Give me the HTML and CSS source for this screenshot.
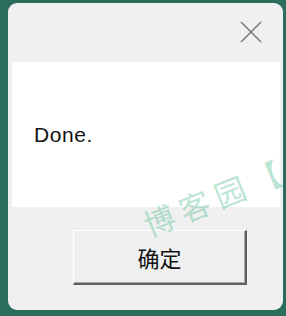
FILE: index.html
```html
<!DOCTYPE html>
<html lang="zh">
<head>
<meta charset="utf-8">
<title>Message</title>
<link rel="stylesheet" href="styles.css">
</head>
<body>
<div class="window">
  <div class="titlebar">
    <svg class="close" width="22" height="22" viewBox="0 0 22 22" aria-label="Close">
      <path d="M1 1 L21 21 M21 1 L1 21" stroke="#7c7c7c" stroke-width="1.6" fill="none"/>
    </svg>
  </div>
  <div class="content">
    <span class="message">Done.</span>
  </div>
  <div class="footer">
    <button class="ok">确定</button>
  </div>
</div>
<div class="watermark">博客园【</div>
</body>
</html>
```

FILE: styles.css
```css
html, body {
  margin: 0;
  padding: 0;
  width: 286px;
  height: 316px;
  overflow: hidden;
}
body {
  background: #2b6d5d;
  position: relative;
  font-family: "Liberation Sans", Arial, "Noto Sans CJK SC", sans-serif;
}
.window {
  margin: 3px 0 0 8px;
  width: 275px;
  height: 307px;
  border-radius: 9px;
  background: #f0f0f0;
  overflow: hidden;
  display: flex;
  flex-direction: column;
}
.titlebar {
  height: 59px;
  display: flex;
  justify-content: flex-end;
  align-items: flex-start;
  padding: 18px 21px 0 0;
  box-sizing: border-box;
}
.close {
  display: block;
}
.content {
  height: 145px;
  margin: 0 3px 0 4px;
  background: #ffffff;
  display: flex;
  align-items: center;
  padding-left: 22px;
}
.message {
  font-size: 21px;
  letter-spacing: 0.6px;
  color: #111;
  line-height: 24px;
}
.footer {
  flex: 1;
  padding: 23px 0 0 65px;
}
.ok {
  width: 174px;
  height: 55px;
  background: #efefef;
  border-style: solid;
  border-width: 1px 2px 2px 1px;
  border-color: #ffffff #5f5f5f #5f5f5f #ffffff;
  box-shadow: inset -1px -1px 0 #a8a8a8;
  font-family: "Noto Sans CJK SC", sans-serif;
  font-size: 22px;
  color: #111;
  padding: 0;
  margin: 0;
}
.watermark {
  position: absolute;
  left: 136px;
  top: 204px;
  font-family: "Noto Sans CJK SC", sans-serif;
  font-size: 31px;
  font-weight: 400;
  letter-spacing: 7px;
  color: rgba(60, 180, 130, 0.36);
  transform: rotate(-22deg);
  transform-origin: left top;
  white-space: nowrap;
  pointer-events: none;
}
```
